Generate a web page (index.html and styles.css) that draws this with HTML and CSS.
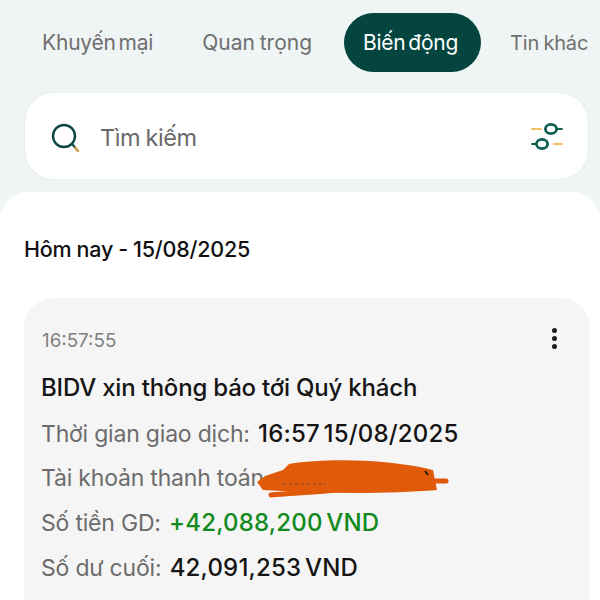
FILE: index.html
```html
<!DOCTYPE html>
<html lang="vi">
<head>
    <meta charset="UTF-8">
    <meta name="viewport" content="width=device-width, initial-scale=1.0">
    <title>Biến động</title>
    <link rel="stylesheet" href="styles.css">
</head>
<body>

    <div class="tabs">
        <a class="tab tab-1">Khuyến mại</a>
        <a class="tab tab-2">Quan trọng</a>
        <a class="tab active">Biến động</a>
        <a class="tab tab-4">Tin khác</a>
    </div>

    <div class="search">
        <svg class="search-icon" width="32" height="32" viewBox="0 0 32 32" fill="none">
            <circle cx="14" cy="14" r="11" stroke="#0d4740" stroke-width="2.4"/>
            <path d="M22.5 22.5l5 6" stroke="#0d4740" stroke-width="2" stroke-linecap="round"/>
            <path d="M25.5 26l2.5 3" stroke="#d9a04e" stroke-width="2.4" stroke-linecap="round"/>
        </svg>
        <span class="search-text">Tìm kiếm</span>
        <svg class="filter-icon" width="32" height="28" viewBox="0 0 32 28" fill="none">
            <path d="M1 7h9" stroke="#f2c063" stroke-width="2" stroke-linecap="round"/>
            <path d="M23 22h8" stroke="#f2c063" stroke-width="2" stroke-linecap="round"/>
            <ellipse cx="20" cy="7" rx="5.6" ry="4.6" stroke="#0d5c50" stroke-width="2.8"/>
            <path d="M26 7h5" stroke="#0d5c50" stroke-width="1.8" stroke-linecap="round"/>
            <ellipse cx="11" cy="22" rx="5.6" ry="4.6" stroke="#0d5c50" stroke-width="2.8"/>
            <path d="M1 22h4" stroke="#0d5c50" stroke-width="1.8" stroke-linecap="round"/>
        </svg>
    </div>

    <div class="sheet">
        <h2 class="day">Hôm nay - 15/08/2025</h2>

        <div class="card">
            <div class="card-top">
                <span class="time">16:57:55</span>
                <div class="more"><i></i><i></i><i></i></div>
            </div>
            <div class="title">BIDV xin thông báo tới Quý khách</div>
            <div class="row">Thời gian giao dịch: <b>16:57 15/08/2025</b></div>
            <div class="row account">Tài khoản thanh toán
                <svg class="scribble" width="192" height="42" viewBox="0 0 192 42" fill="none">
                    <path d="M32 6C70 0 130 1 176 12L180 32C130 36 70 36 6 32L0 24L8 18L26 12Z" fill="#e05a0a"/>
                    <path d="M176 23H189" stroke="#e05a0a" stroke-width="5" stroke-linecap="round"/>
                    <path d="M14 37C40 35 60 34 90 31" stroke="#e05a0a" stroke-width="5" stroke-linecap="round"/>
                    <path d="M26 26H69" stroke="#7a4a2a" stroke-width="1" stroke-dasharray="3 3"/>
                    <path d="M168 13l3 4" stroke="#2a1a10" stroke-width="2"/>
                </svg>
            </div>
            <div class="row">Số tiền GD: <b class="plus">+42,088,200 VND</b></div>
            <div class="row">Số dư cuối: <b>42,091,253 VND</b></div>
        </div>
    </div>

</body>
</html>
```

FILE: styles.css
```css
html, body {
    height: 600px;
    overflow: hidden;
}

body {
    font-family: Inter, "Noto Sans", sans-serif;
    margin: 0;
    padding: 0;
    background-color: #eff4f5;
    display: flex;
    flex-direction: column;
}

.tabs {
    display: flex;
    flex-shrink: 0;
    align-items: center;
    height: 59px;
    margin-top: 13px;
    padding-left: 42px;
    white-space: nowrap;
}

.tab {
    font-size: 21px;
    letter-spacing: -0.2px;
    word-spacing: -3px;
    color: #6f6f6f;
}

.tab-2 {
    margin-left: 49px;
    letter-spacing: 0;
    word-spacing: -1px;
}

.tab.active {
    display: flex;
    align-items: center;
    justify-content: center;
    flex-shrink: 0;
    width: 137px;
    height: 59px;
    margin-left: 32px;
    padding-right: 4px;
    box-sizing: border-box;
    border-radius: 30px;
    background-color: #04463f;
    color: white;
}

.tab-4 {
    margin-left: 29px;
    font-size: 20px;
    word-spacing: -1px;
}

.search {
    display: flex;
    flex-shrink: 0;
    align-items: center;
    box-sizing: border-box;
    height: 88px;
    margin: 20px 11px 0 24px;
    padding: 0 25px 0 25px;
    background-color: white;
    border: 1px solid #e9eeee;
    border-radius: 30px;
}

.search-icon {
    margin-top: 4px;
}

.search-text {
    margin-top: 2px;
    margin-left: 18px;
    font-size: 23.5px;
    letter-spacing: -0.4px;
    word-spacing: -1px;
    color: #6a6a6a;
}

.filter-icon {
    margin-left: auto;
}

.sheet {
    display: flex;
    flex-direction: column;
    flex: 1;
    min-height: 0;
    margin-top: 12px;
    padding: 43px 10px 0 24px;
    background-color: white;
    border-radius: 28px 28px 0 0;
}

.day {
    flex-shrink: 0;
    margin: 0;
    font-size: 21.5px;
    line-height: 28px;
    font-weight: 500;
    letter-spacing: -0.2px;
    word-spacing: -0.5px;
    color: #111;
}

.card {
    flex: 1;
    min-height: 0;
    margin-top: 35px;
    padding: 27px 34px 0 17px;
    background-color: #f5f5f5;
    border-radius: 30px 30px 0 0;
}

.card-top {
    display: flex;
    justify-content: space-between;
    align-items: center;
    height: 30px;
}

.time {
    margin-left: 1px;
    font-size: 18.8px;
    color: #808080;
}

.more {
    display: flex;
    flex-direction: column;
    gap: 3px;
    margin-top: -3px;
    margin-right: -1px;
}

.more i {
    display: block;
    width: 5px;
    height: 5px;
    border-radius: 50%;
    background-color: #1b1b1b;
}

.title {
    margin-top: 17px;
    font-size: 24px;
    line-height: 32px;
    font-weight: 500;
    letter-spacing: -0.2px;
    white-space: nowrap;
    color: #151515;
}

.row {
    position: relative;
    margin-top: 13px;
    font-size: 23px;
    line-height: 31px;
    letter-spacing: -0.2px;
    white-space: nowrap;
    color: #6c6c6c;
}

.title + .row {
    margin-top: 14px;
}

.row b {
    margin-left: 2px;
    font-size: 24px;
    font-weight: 500;
    letter-spacing: 0.2px;
    word-spacing: -3px;
    color: #151515;
}

.row b.plus {
    color: #128a1e;
}

.scribble {
    position: absolute;
    left: 216px;
    top: -5px;
}
```
